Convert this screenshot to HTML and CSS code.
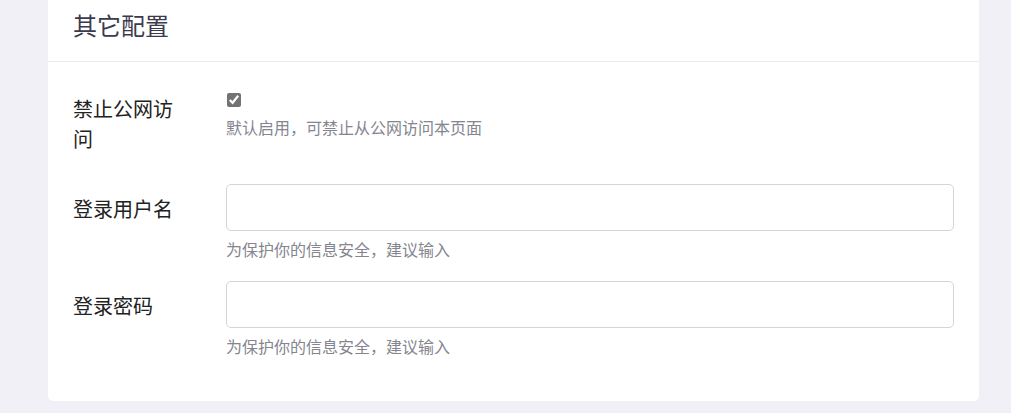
FILE: index.html
```html
<!DOCTYPE html>
<html lang="zh-CN">
<head>
  <meta charset="UTF-8">
  <meta name="viewport" content="width=device-width, initial-scale=1.0">
  <title>其它配置</title>
  <link rel="stylesheet" href="styles.css">
</head>
<body>
  <div class="page">
    <div class="card">
      <div class="card-header">
        <h2 class="card-title">其它配置</h2>
      </div>
      <div class="card-body">
        <div class="form-row">
          <label class="form-label" for="blockPublic">禁止公网访问</label>
          <div class="form-field">
            <input id="blockPublic" class="check" type="checkbox" checked>
            <div class="help">默认启用，可禁止从公网访问本页面</div>
          </div>
        </div>
        <div class="form-row">
          <label class="form-label" for="loginUser">登录用户名</label>
          <div class="form-field">
            <input id="loginUser" class="text-input" type="text">
            <div class="help">为保护你的信息安全，建议输入</div>
          </div>
        </div>
        <div class="form-row">
          <label class="form-label" for="loginPass">登录密码</label>
          <div class="form-field">
            <input id="loginPass" class="text-input" type="password">
            <div class="help">为保护你的信息安全，建议输入</div>
          </div>
        </div>
      </div>
    </div>
  </div>
</body>
</html>
```
FILE: styles.css
```css
html, body {
  margin: 0;
  padding: 0;
  height: 100%;
}
body {
  background-color: #f0f0f6;
  font-family: "Noto Sans CJK SC", "Noto Sans", sans-serif;
}
.page {
  padding: 0 32px 12px 48px;
}
.card {
  background-color: #fff;
  border-radius: 0 0 5px 5px;
}
.card-header {
  height: 61px;
  padding: 0 25px;
  border-bottom: 1px solid #ebebef;
}
.card-title {
  margin: 0;
  font-size: 24px;
  font-weight: normal;
  line-height: 49px;
  color: #3b3b4d;
}
.card-body {
  padding: 22px 25px 43px;
  display: flex;
  flex-direction: column;
  gap: 20px;
}
.form-row {
  display: flex;
}
.form-label {
  width: 110px;
  margin-right: 43px;
  padding: 10px 0;
  font-size: 20px;
  line-height: 30px;
  color: #222;
}
.form-field {
  flex: 1;
  display: flex;
  flex-direction: column;
  align-items: flex-start;
}
.check {
  width: 14px;
  height: 14px;
  margin: 9px 0 0 1px;
  accent-color: #737373;
}
.text-input {
  box-sizing: border-box;
  width: 100%;
  height: 47px;
  padding: 0 12px;
  border: 1px solid #d3d5db;
  border-radius: 5px;
  font-size: 16px;
  outline: none;
}
.help {
  margin-top: 6px;
  font-size: 16px;
  line-height: 24px;
  color: #85858f;
}
.check + .help {
  margin-top: 8px;
}
```
